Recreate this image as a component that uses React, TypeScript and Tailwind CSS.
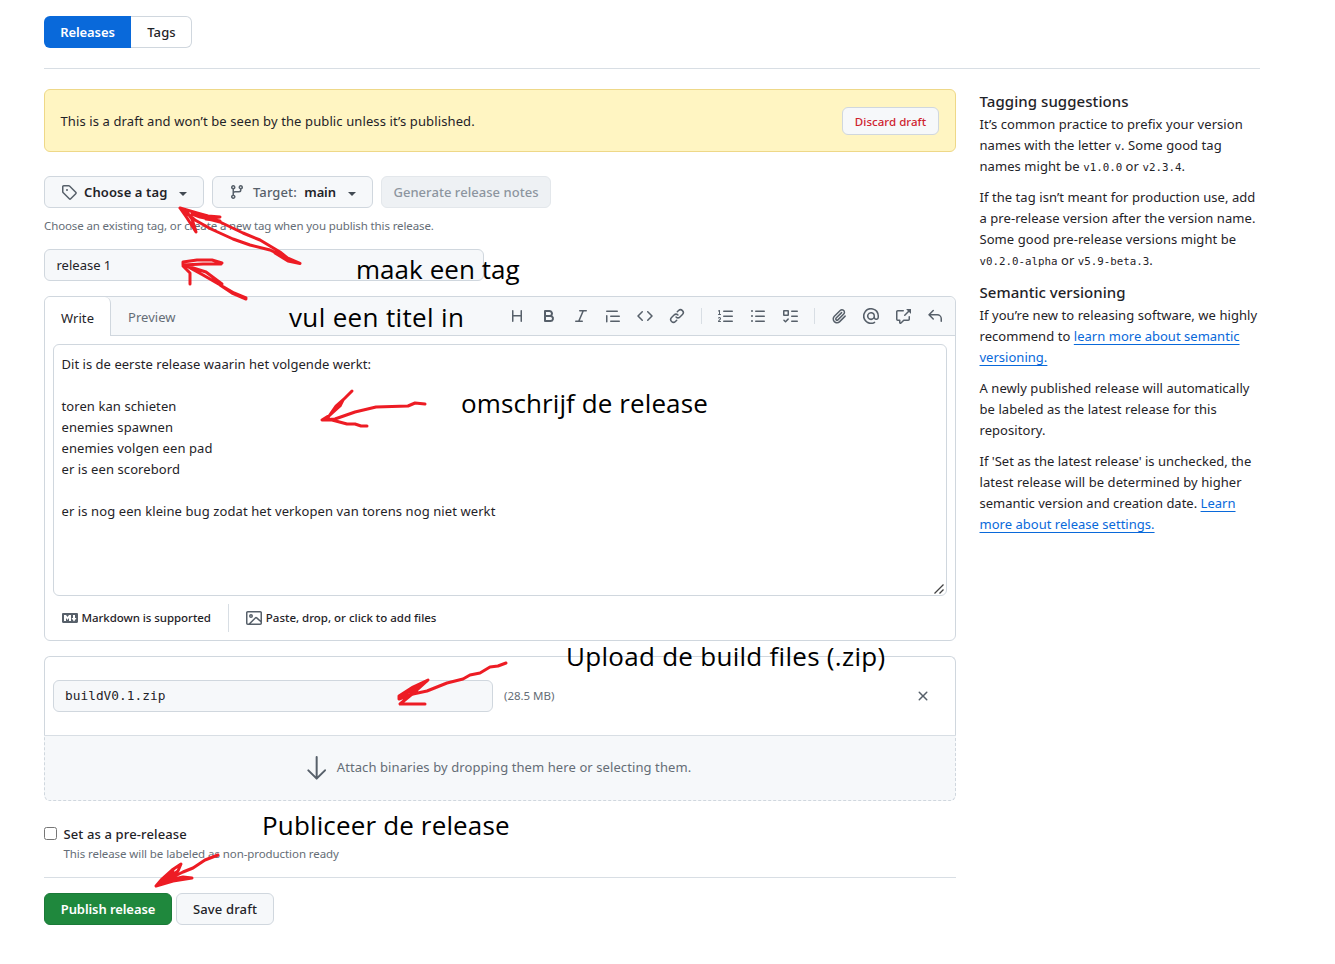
import React from 'react';

const icons = {
  tag: 'M1 7.775V2.75C1 1.784 1.784 1 2.75 1h5.025c.464 0 .91.184 1.238.513l6.25 6.25a1.75 1.75 0 0 1 0 2.474l-5.026 5.026a1.75 1.75 0 0 1-2.474 0l-6.25-6.25A1.752 1.752 0 0 1 1 7.775Zm1.5 0c0 .066.026.13.073.177l6.25 6.25a.25.25 0 0 0 .354 0l5.025-5.025a.25.25 0 0 0 0-.354l-6.25-6.25a.25.25 0 0 0-.177-.073H2.75a.25.25 0 0 0-.25.25ZM6 5a1 1 0 1 1 0 2 1 1 0 0 1 0-2Z',
  branch: 'M9.5 3.25a2.25 2.25 0 1 1 3 2.122V6A2.5 2.5 0 0 1 10 8.5H6a1 1 0 0 0-1 1v1.128a2.251 2.251 0 1 1-1.5 0V5.372a2.25 2.25 0 1 1 1.5 0v1.836A2.493 2.493 0 0 1 6 7h4a1 1 0 0 0 1-1v-.628A2.25 2.25 0 0 1 9.5 3.25Zm-6 0a.75.75 0 1 0 1.5 0 .75.75 0 0 0-1.5 0Zm8.25-.75a.75.75 0 1 0 0 1.5.75.75 0 0 0 0-1.5ZM4.25 12a.75.75 0 1 0 0 1.5.75.75 0 0 0 0-1.5Z',
  heading: 'M3.75 2a.75.75 0 0 1 .75.75V7h7V2.75a.75.75 0 0 1 1.5 0v10.5a.75.75 0 0 1-1.5 0V8.5h-7v4.75a.75.75 0 0 1-1.5 0V2.75A.75.75 0 0 1 3.75 2Z',
  bold: 'M4 2h4.5a3.501 3.501 0 0 1 2.852 5.53A3.499 3.499 0 0 1 9.5 14H4a1 1 0 0 1-1-1V3a1 1 0 0 1 1-1Zm1 7v3h4.5a1.5 1.5 0 0 0 0-3Zm3.5-2a1.5 1.5 0 0 0 0-3H5v3Z',
  italic: 'M6 2.75A.75.75 0 0 1 6.75 2h6.5a.75.75 0 0 1 0 1.5h-2.505l-3.858 9H9.25a.75.75 0 0 1 0 1.5h-6.5a.75.75 0 0 1 0-1.5h2.505l3.858-9H6.75A.75.75 0 0 1 6 2.75Z',
  quote: 'M1.75 2.5h10.5a.75.75 0 0 1 0 1.5H1.75a.75.75 0 0 1 0-1.5Zm4 5h8.5a.75.75 0 0 1 0 1.5h-8.5a.75.75 0 0 1 0-1.5Zm0 5h8.5a.75.75 0 0 1 0 1.5h-8.5a.75.75 0 0 1 0-1.5ZM2.5 7.75v6a.75.75 0 0 1-1.5 0v-6a.75.75 0 0 1 1.5 0Z',
  code: 'm11.28 3.22 4.25 4.25a.75.75 0 0 1 0 1.06l-4.25 4.25a.749.749 0 0 1-1.275-.326.749.749 0 0 1 .215-.734L13.94 8l-3.72-3.72a.749.749 0 0 1 .326-1.275.749.749 0 0 1 .734.215Zm-6.56 0a.751.751 0 0 1 1.042.018.751.751 0 0 1 .018 1.042L2.06 8l3.72 3.72a.749.749 0 0 1-.326 1.275.749.749 0 0 1-.734-.215L.47 8.53a.75.75 0 0 1 0-1.06Z',
  link: 'm7.775 3.275 1.25-1.25a3.5 3.5 0 1 1 4.95 4.95l-2.5 2.5a3.5 3.5 0 0 1-4.95 0 .751.751 0 0 1 .018-1.042.751.751 0 0 1 1.042-.018 1.998 1.998 0 0 0 2.83 0l2.5-2.5a2.002 2.002 0 0 0-2.83-2.83l-1.25 1.25a.751.751 0 0 1-1.042-.018.751.751 0 0 1-.018-1.042Zm-4.69 9.64a1.998 1.998 0 0 0 2.83 0l1.25-1.25a.751.751 0 0 1 1.042.018.751.751 0 0 1 .018 1.042l-1.25 1.25a3.5 3.5 0 1 1-4.95-4.95l2.5-2.5a3.5 3.5 0 0 1 4.95 0 .751.751 0 0 1-.018 1.042.751.751 0 0 1-1.042.018 1.998 1.998 0 0 0-2.83 0l-2.5 2.5a1.998 1.998 0 0 0 0 2.83Z',
  ordered: 'M5 3.25a.75.75 0 0 1 .75-.75h8.5a.75.75 0 0 1 0 1.5h-8.5A.75.75 0 0 1 5 3.25Zm0 5a.75.75 0 0 1 .75-.75h8.5a.75.75 0 0 1 0 1.5h-8.5A.75.75 0 0 1 5 8.25Zm0 5a.75.75 0 0 1 .75-.75h8.5a.75.75 0 0 1 0 1.5h-8.5a.75.75 0 0 1-.75-.75ZM.924 10.32a.5.5 0 0 1-.851-.525l.001-.001.001-.002.002-.004.007-.011c.097-.144.215-.273.348-.384.228-.19.588-.392 1.068-.392.468 0 .858.181 1.126.484.259.294.377.673.377 1.038 0 .987-.686 1.495-1.156 1.845l-.047.035c-.303.225-.522.4-.654.597h1.357a.5.5 0 0 1 0 1H.5a.5.5 0 0 1-.5-.5c0-1.005.692-1.52 1.167-1.875l.035-.025c.531-.396.8-.625.8-1.078a.57.57 0 0 0-.128-.376C1.806 10.068 1.695 10 1.5 10a.658.658 0 0 0-.429.163.835.835 0 0 0-.144.153ZM2.003 2.5V6h.503a.5.5 0 0 1 0 1H.5a.5.5 0 0 1 0-1h.503V3.308l-.28.14a.5.5 0 0 1-.446-.895l1.003-.5a.5.5 0 0 1 .723.447Z',
  unordered: 'M5.75 2.5h8.5a.75.75 0 0 1 0 1.5h-8.5a.75.75 0 0 1 0-1.5Zm0 5h8.5a.75.75 0 0 1 0 1.5h-8.5a.75.75 0 0 1 0-1.5Zm0 5h8.5a.75.75 0 0 1 0 1.5h-8.5a.75.75 0 0 1 0-1.5ZM2 14a1 1 0 1 1 0-2 1 1 0 0 1 0 2Zm1-6a1 1 0 1 1-2 0 1 1 0 0 1 2 0ZM2 4a1 1 0 1 1 0-2 1 1 0 0 1 0 2Z',
  tasks: 'M2 2h4a1 1 0 0 1 1 1v4a1 1 0 0 1-1 1H2a1 1 0 0 1-1-1V3a1 1 0 0 1 1-1Zm4.655 8.595a.75.75 0 0 1 0 1.06L4.03 14.28a.75.75 0 0 1-1.06 0l-1.5-1.5a.749.749 0 0 1 .326-1.275.749.749 0 0 1 .734.215l.97.97 2.095-2.095a.75.75 0 0 1 1.06 0ZM9.75 2.5h5.5a.75.75 0 0 1 0 1.5h-5.5a.75.75 0 0 1 0-1.5Zm0 5h5.5a.75.75 0 0 1 0 1.5h-5.5a.75.75 0 0 1 0-1.5Zm0 5h5.5a.75.75 0 0 1 0 1.5h-5.5a.75.75 0 0 1 0-1.5Zm-7.25-9v3h3v-3Z',
  clip: 'M12.212 3.02a1.753 1.753 0 0 0-2.478.003l-5.83 5.83a3.007 3.007 0 0 0-.88 2.127c0 .795.315 1.551.88 2.116.567.567 1.333.89 2.126.89.79 0 1.548-.321 2.116-.89l5.48-5.48a.75.75 0 0 1 1.061 1.06l-5.48 5.48a4.492 4.492 0 0 1-3.177 1.33c-1.2 0-2.345-.487-3.187-1.33a4.483 4.483 0 0 1-1.32-3.177c0-1.195.475-2.341 1.32-3.186l5.83-5.83a3.25 3.25 0 0 1 5.553 2.297c0 .863-.343 1.691-.953 2.301L7.439 12.39c-.375.377-.884.59-1.416.593a1.998 1.998 0 0 1-1.412-.593 1.992 1.992 0 0 1 0-2.828l5.48-5.48a.751.751 0 0 1 1.042.018.751.751 0 0 1 .018 1.042l-5.48 5.48a.492.492 0 0 0 0 .707.499.499 0 0 0 .352.154.51.51 0 0 0 .356-.154l5.833-5.827a1.755 1.755 0 0 0 0-2.481Z',
  mention: 'M4.75 2.37a6.501 6.501 0 0 0 6.5 11.26.75.75 0 0 1 .75 1.298A7.999 7.999 0 0 1 .989 4.148 8 8 0 0 1 16 7.75v1.5a2.75 2.75 0 0 1-5.072 1.475 3.999 3.999 0 0 1-6.65-4.19A4 4 0 0 1 12 8v1.25a1.25 1.25 0 0 0 2.5 0V7.867a6.5 6.5 0 0 0-9.75-5.496ZM10.5 8a2.5 2.5 0 1 0-5 0 2.5 2.5 0 0 0 5 0Z',
  cross: 'M2.75 3.5a.25.25 0 0 0-.25.25v7.5c0 .138.112.25.25.25h2a.75.75 0 0 1 .75.75v2.19l2.72-2.72a.749.749 0 0 1 .53-.22h4.5a.25.25 0 0 0 .25-.25v-2.5a.75.75 0 0 1 1.5 0v2.5A1.75 1.75 0 0 1 13.25 13H9.06l-2.573 2.573A1.458 1.458 0 0 1 4 14.543V13H2.75A1.75 1.75 0 0 1 1 11.25v-7.5C1 2.784 1.784 2 2.75 2h5.5a.75.75 0 0 1 0 1.5ZM16 1.25v4.146a.25.25 0 0 1-.427.177L14.03 4.03l-3.75 3.75a.749.749 0 0 1-1.275-.326.749.749 0 0 1 .215-.734l3.75-3.75-1.543-1.543A.25.25 0 0 1 11.604 1h4.146a.25.25 0 0 1 .25.25Z',
  reply: 'M6.78 1.97a.75.75 0 0 1 0 1.06L3.81 6h6.44A4.75 4.75 0 0 1 15 10.75v2.5a.75.75 0 0 1-1.5 0v-2.5a3.25 3.25 0 0 0-3.25-3.25H3.81l2.97 2.97a.749.749 0 0 1-.326 1.275.749.749 0 0 1-.734-.215L1.47 7.28a.75.75 0 0 1 0-1.06l4.25-4.25a.75.75 0 0 1 1.06 0Z',
  x: 'M3.72 3.72a.75.75 0 0 1 1.06 0L8 6.94l3.22-3.22a.749.749 0 0 1 1.275.326.749.749 0 0 1-.215.734L9.06 8l3.22 3.22a.749.749 0 0 1-.326 1.275.749.749 0 0 1-.734-.215L8 9.06l-3.22 3.22a.751.751 0 0 1-1.042-.018.751.751 0 0 1-.018-1.042L6.94 8 3.72 4.78a.75.75 0 0 1 0-1.06Z',
  markdown: 'M14.85 3c.63 0 1.15.52 1.14 1.15v7.7c0 .63-.51 1.15-1.15 1.15H1.15C.52 13 0 12.48 0 11.84V4.15C0 3.52.52 3 1.15 3ZM9 11V5H7L5.5 7 4 5H2v6h2V8l1.5 1.92L7 8v3Zm2.99.5L14.5 8H13V5h-2v3H9.5Z',
  image: 'M16 13.25A1.75 1.75 0 0 1 14.25 15H1.75A1.75 1.75 0 0 1 0 13.25V2.75C0 1.784.784 1 1.75 1h12.5c.966 0 1.75.784 1.75 1.75ZM1.75 2.5a.25.25 0 0 0-.25.25v10.5c0 .138.112.25.25.25h.94l.03-.03 6.077-6.078a1.75 1.75 0 0 1 2.412-.06L14.5 10.31V2.75a.25.25 0 0 0-.25-.25Zm12.5 11a.25.25 0 0 0 .25-.25v-.917l-4.298-3.889a.25.25 0 0 0-.344.009L4.81 13.5ZM7 6a2 2 0 1 1-3.999.001A2 2 0 0 1 7 6ZM5.5 6a.5.5 0 1 0-1 0 .5.5 0 0 0 1 0Z',
};

type IconName = keyof typeof icons;

function Icon({ name }: { name: IconName }) {
  return (
    <svg viewBox="0 0 16 16" className="h-4 w-4 shrink-0 fill-[#57606a]">
      <path d={icons[name]} />
    </svg>
  );
}

function Caret() {
  return (
    <svg viewBox="0 0 8 4" className="mt-[3px] h-1 w-2 shrink-0 fill-[#424a53]">
      <path d="M0 0h8L4 4z" />
    </svg>
  );
}

const toolbar: IconName[][] = [
  ['heading', 'bold', 'italic', 'quote', 'code', 'link'],
  ['ordered', 'unordered', 'tasks'],
  ['clip', 'mention', 'cross', 'reply'],
];

const strokes = [
  'M180 208L187 218L196 232L192 219L186 211M180 208L197 213L208 216L220 217L206 219L220 221L200 217L192 214M180 208L195 220L211 229L233 239L250 245L270 250L285 257L300 263.500M197 216L220 222L243 233L260 240L280 252L290 260L300 263.500L288 261L275 253',
  'M222 263L212 260L197 260L183 262L183 265L203 264L221 264M183 266L190 273L190 284M183 264L192 269L203 275L222 286L234 293L246 298M190 267L206 272L222 284M220 285L232 293L246 299',
  'M352 391L343 400L340 406L330 415L322 420L332 420L347 424L355 424L361 426L367 426M425 404L415 403L408 406L376 407L355 412L335 419L322 420M345 398L336 406L327 419',
  'M506 663L498 666L490 667L480 673L470 675L463 679L447 683L427 691L413 694L399 699L399 696L413 687L428 680L417 690L400 704L425 704M427 681L415 689L399 697M419 686L410 692',
  'M218 855L205 860L193 868L183 872L167 880L156 886L162 879L172 870L181 864L178 871L167 879M156 886L173 881L192 878L183 877L165 881M173 871L162 881',
];

const notes = [
  { text: 'maak een tag', place: 'left-[356px] top-[251px] tracking-[0.05px]' },
  { text: 'vul een titel in', place: 'left-[289px] top-[299px] tracking-[0.35px]' },
  { text: 'omschrijf de release', place: 'left-[461px] top-[385px] tracking-[0.1px]' },
  { text: 'Upload de build files (.zip)', place: 'left-[566px] top-[638px] tracking-[0.28px]' },
  { text: 'Publiceer de release', place: 'left-[262px] top-[807px] tracking-[0.15px]' },
];

function Mono({ children }: { children: React.ReactNode }) {
  return <code className="font-['DejaVu_Sans_Mono',monospace] text-[10.8px] leading-none tracking-normal">{children}</code>;
}

function Link({ children }: { children: React.ReactNode }) {
  return <a className="tracking-[0.02px] text-[#0969da] underline decoration-1 underline-offset-[3px]">{children}</a>;
}

export default function App() {
  return (
    <div className="relative h-[964px] w-[1335px] overflow-hidden bg-white pl-[44px] pt-4 font-['Noto_Sans',sans-serif] text-[13px] leading-[21px] tracking-[0.09px] whitespace-nowrap text-[#1f2328]">
      <nav className="flex h-8">
        <div className="flex w-[87px] items-center justify-center rounded-l-md bg-[#0969da] pt-px font-semibold tracking-[-0.1px] text-white">Releases</div>
        <div className="flex w-[61px] items-center justify-center rounded-r-md border border-l-0 border-[#d0d7de] pt-px pl-px font-medium">Tags</div>
      </nav>
      <div className="mt-5 w-[1216px] border-t border-[#d8dee4]" />

      <div className="flex gap-6 pt-5">
        <main className="w-[912px] shrink-0">
          <div className="flex h-[63px] items-center justify-between rounded-md border border-[#eed888] bg-[#fff5c2] pl-[15.5px] pr-4">
            <span className="pt-px tracking-[0.11px]">This is a draft and won’t be seen by the public unless it’s published.</span>
            <button className="h-7 w-[97px] rounded-md border border-[#d0d7de] bg-[#f6f8fa] pt-px text-[11.5px] font-medium tracking-[0.03px] text-[#cf222e]">Discard draft</button>
          </div>

          <div className="mt-6 flex h-8 gap-2">
            <button className="flex w-[160px] items-center rounded-md border border-[#d0d7de] bg-[#f6f8fa] px-4">
              <Icon name="tag" />
              <span className="ml-[7px] flex-1 text-left font-semibold tracking-[0.12px]">Choose a tag</span>
              <Caret />
            </button>
            <button className="flex w-[161px] items-center rounded-md border border-[#d0d7de] bg-[#f6f8fa] px-4">
              <Icon name="branch" />
              <span className="ml-2 font-medium tracking-[0.1px] text-[#57606a]">Target:</span>
              <span className="ml-[7.5px] flex-1 text-left font-semibold tracking-[-0.15px]">main</span>
              <Caret />
            </button>
            <button className="w-[170px] rounded-md border border-[#e3e7eb] bg-[#eef1f4] font-medium tracking-[0.05px] text-[#8c959f]">Generate release notes</button>
          </div>
          <p className="mt-[7px] h-[21px] text-[11.5px] leading-[21px] tracking-[-0.12px] text-[#656d76]">Choose an existing tag, or create a new tag when you publish this release.</p>

          <div className="mt-[13px] flex h-8 w-[440px] items-center rounded-md border border-[#d0d7de] bg-[#f6f8fa] pl-[11.5px] pt-px tracking-normal">release 1</div>

          <section className="mt-[15px] flex h-[345px] flex-col rounded-md border border-[#d0d7de]">
            <div className="flex h-[39px] shrink-0 rounded-t-md bg-[#f6f8fa]">
              <div className="flex w-[66px] items-center justify-center rounded-t-md border-r border-[#d0d7de] bg-white pt-[3px]">Write</div>
              <div className="flex flex-1 items-center justify-between border-b border-[#d0d7de] pl-[17px] pr-3">
                <span className="pt-[3px] tracking-[0.03px] text-[#656d76]">Preview</span>
                <div className="flex items-center gap-4">
                  {toolbar.map((group, i) => (
                    <React.Fragment key={i}>
                      {i > 0 && <div className="h-4 w-px bg-[#d8dee4]" />}
                      {group.map((name) => (
                        <Icon key={name} name={name} />
                      ))}
                    </React.Fragment>
                  ))}
                </div>
              </div>
            </div>
            <div className="mx-2 mt-2 flex h-[252px] shrink-0 items-end justify-between rounded-md border border-[#d0d7de]">
              <div className="h-full pl-[7.5px] pt-[9px] whitespace-pre">
                <span className="tracking-[0.03px]">Dit is de eerste release waarin het volgende werkt:</span>
                {`

toren kan schieten
enemies spawnen
enemies volgen een pad
er is een scorebord

er is nog een kleine bug zodat het verkopen van torens nog niet werkt`}
              </div>
              <svg viewBox="0 0 12 12" className="mr-px h-3 w-3 fill-none stroke-[#424242] stroke-[1.3]">
                <path d="M1.5 10.5L10.500 1.500M6.500 10.500L10.500 6.500" />
              </svg>
            </div>
            <div className="flex flex-1 items-center pl-[17px] text-[11.5px] font-medium">
              <Icon name="markdown" />
              <span className="ml-[3.5px] pb-px tracking-[-0.06px]">Markdown is supported</span>
              <div className="mx-[17px] h-7 w-px bg-[#d8dee4]" />
              <Icon name="image" />
              <span className="ml-1 pb-px tracking-[-0.01px]">Paste, drop, or click to add files</span>
            </div>
          </section>

          <section className="mt-[15px] h-[145px]">
            <div className="flex h-[79px] rounded-t-md border border-b-0 border-[#d0d7de] px-2 pt-[23px]">
              <div className="flex h-8 w-[440px] items-center rounded-md border border-[#d0d7de] bg-[#f6f8fa] pb-px pl-[11px] font-['DejaVu_Sans_Mono',monospace] text-[12.8px] tracking-[0.02px]">buildV0.1.zip</div>
              <span className="ml-[11px] flex h-8 flex-1 items-center pb-0.5 text-[11.5px] tracking-[-0.03px] text-[#656d76]">(28.5 MB)</span>
              <div className="mr-4 flex h-8 items-center">
                <Icon name="x" />
              </div>
            </div>
            <div className="flex h-[66px] items-center justify-center rounded-b-md border border-dashed border-[#d0d7de] border-t-[#d8dee4] bg-[#f6f8fa] pr-2 [border-top-style:solid]">
              <svg viewBox="0 0 24 24" className="h-8 w-8 fill-[#57606a]">
                <path d="M4.970 13.220a.75.75 0 0 1 1.060 0L11 18.190V3.750a.75.75 0 0 1 1.500 0v14.440l4.970-4.970a.749.749 0 0 1 1.275.326.749.749 0 0 1-.215.734l-6.250 6.250a.75.75 0 0 1-1.060 0l-6.250-6.250a.75.75 0 0 1 0-1.060Z" />
              </svg>
              <span className="ml-1 pb-0.5 text-[#656d76]">Attach binaries by dropping them here or selecting them.</span>
            </div>
          </section>

          <div className="mt-[22px] flex">
            <div className="mt-[4px] h-[13px] w-[13px] rounded-[2.5px] border border-[#767676] bg-white" />
            <div className="ml-[6.5px] pt-px">
              <div className="leading-[21px] font-medium tracking-[0.13px]">Set as a pre-release</div>
              <div className="text-[11.5px] leading-[18px] tracking-[-0.08px] text-[#656d76]">This release will be labeled as non-production ready</div>
            </div>
          </div>
          <div className="mt-[14px] border-t border-[#d8dee4]" />
          <div className="mt-[15px] flex h-8 gap-1">
            <button className="w-32 rounded-md border border-[#1b7a38] bg-[#1f883d] font-semibold tracking-[-0.08px] text-white">Publish release</button>
            <button className="w-[98px] rounded-md border border-[#d0d7de] bg-[#f6f8fa] font-medium tracking-[0.15px]">Save draft</button>
          </div>
        </main>

        <aside className="-ml-[0.5px] whitespace-pre tracking-[0.06px]">
          <h2 className="mb-px text-[15px] leading-6 font-medium">Tagging suggestions</h2>
          <p className="mb-[9px]">
            It’s common practice to prefix your version<br />
            names with the letter <Mono>v</Mono>. Some good tag<br />
            names might be <Mono>v1.0.0</Mono> or <Mono>v2.3.4</Mono>.
          </p>
          <p className="mt-2.5 mb-[9px]">
            If the tag isn’t meant for production use, add<br />
            a pre-release version after the version name.<br />
            Some good pre-release versions might be<br />
            <Mono>v0.2.0-alpha</Mono> or <Mono>v5.9-beta.3</Mono>.
          </p>
          <h2 className="mb-px text-[15px] leading-6 font-medium tracking-[0.02px]">Semantic versioning</h2>
          <p className="mb-2.5">
            If you’re new to releasing software, we highly<br />
            recommend to <Link>learn more about semantic<br />versioning.</Link>
          </p>
          <p className="mb-2.5">
            A newly published release will automatically<br />
            be labeled as the latest release for this<br />
            repository.
          </p>
          <p>
            <span className="tracking-[0.01px]">If 'Set as the latest release' is unchecked, the</span><br />
            latest release will be determined by higher<br />
            <span className="tracking-normal">semantic version and creation date. </span><Link>Learn<br />more about release settings.</Link>
          </p>
        </aside>
      </div>

      {notes.map((n) => (
        <span key={n.text} className={`absolute font-['Open_Sans',sans-serif] text-[26px] leading-9 text-black ${n.place}`}>
          {n.text}
        </span>
      ))}
      <svg viewBox="0 0 1335 964" className="pointer-events-none absolute left-0 top-0 h-[964px] w-[1335px] fill-none stroke-[#ed1c24] stroke-3 [stroke-linecap:round] [stroke-linejoin:round]">
        {strokes.map((d) => (
          <path key={d} d={d} />
        ))}
      </svg>
    </div>
  );
}
